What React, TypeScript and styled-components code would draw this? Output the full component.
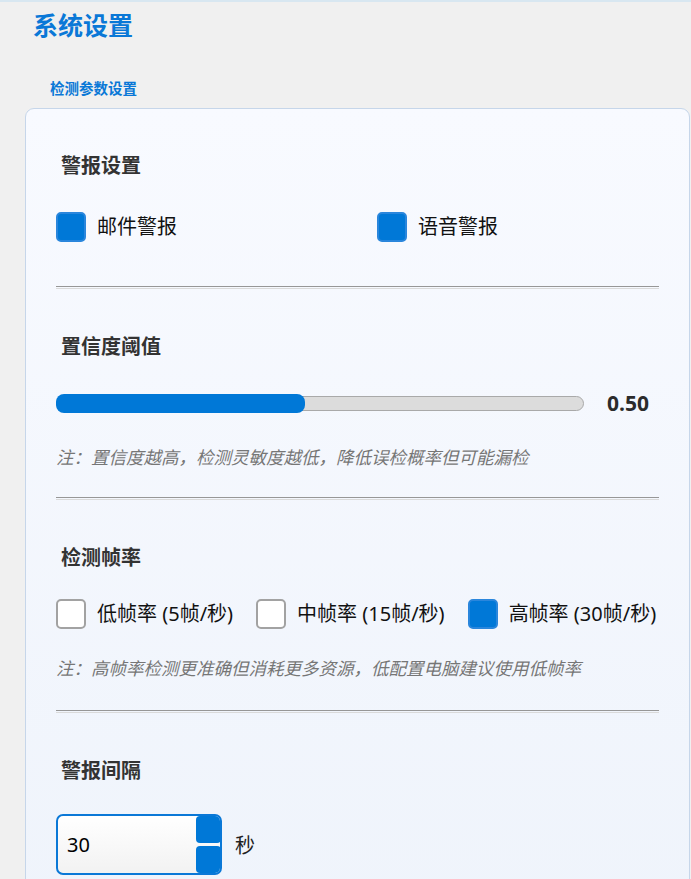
import React from "react";
import styled, { createGlobalStyle } from "styled-components";

const GlobalStyle = createGlobalStyle`
  html, body {
    margin: 0;
    padding: 0;
    overflow: hidden;
    background: #f0f0f0;
  }
  body {
    font-family: "Noto Sans", "Noto Sans CJK SC", sans-serif;
    color: #000;
  }
  * { box-sizing: border-box; }
`;

const Page = styled.div`
  border-top: 2px solid #d8e7f1;
  padding: 0 1px 0 25px;
  min-height: 879px;
`;

const PageTitle = styled.h1`
  margin: 0;
  padding: 6px 0 0 8px;
  font-size: 25px;
  line-height: 34px;
  font-weight: 700;
  color: #0a78d7;
`;

const TabLabel = styled.div`
  margin-top: 35px;
  padding-left: 25px;
  font-size: 14.5px;
  line-height: 22px;
  font-weight: 700;
  color: #0a78d7;
`;

const Card = styled.div`
  margin-top: 9px;
  border: 1px solid #c6d6ea;
  border-radius: 9px;
  background: linear-gradient(180deg, #f8faff 0%, #eef3fb 100%);
  padding: 0 30px 60px 30px;
  min-height: 900px;
`;

const Section = styled.section<{ $top: number; $bottom: number; $gap?: number }>`
  display: flex;
  flex-direction: column;
  padding-top: ${(p) => p.$top}px;
  padding-bottom: ${(p) => p.$bottom}px;
  gap: ${(p) => p.$gap ?? 28}px;
`;

const SectionTitle = styled.h2`
  margin: 0;
  padding-left: 5px;
  font-size: 20px;
  line-height: 28px;
  font-weight: 700;
  color: #333;
`;

const Divider = styled.hr`
  margin: 0;
  height: 3px;
  border: none;
  border-top: 1px solid #979797;
  border-bottom: 1px solid #dadada;
`;

const OptionGrid = styled.div`
  display: grid;
  grid-template-columns: 321px auto;
  align-items: center;
`;

const OptionRow = styled.div`
  display: flex;
  align-items: center;
  gap: 23px;
`;

const Option = styled.label`
  display: flex;
  align-items: center;
  gap: 11px;
  font-size: 20px;
  line-height: 30px;
  color: #111;
  white-space: nowrap;
`;

const Box = styled.span<{ $checked: boolean }>`
  display: inline-block;
  width: 30px;
  height: 30px;
  flex: none;
  border-radius: 5px;
  border: 2px solid ${(p) => (p.$checked ? "#2a86dc" : "#a2a2a2")};
  background: ${(p) => (p.$checked ? "#0078d7" : "#ffffff")};
`;

const SliderRow = styled.div`
  display: flex;
  align-items: center;
  gap: 23px;
  height: 28px;
`;

const Track = styled.div`
  position: relative;
  flex: 1;
  height: 15px;
  border: 1px solid #a9a9a9;
  border-radius: 8px;
  background: #dcdcdc;
`;

const Fill = styled.div`
  position: absolute;
  left: -1px;
  top: -3px;
  bottom: -3px;
  border-radius: 8px;
  background: #0078d7;
`;

const SliderValue = styled.span`
  width: 52px;
  font-size: 21px;
  font-weight: 700;
  color: #2b2b2b;
  font-family: "Open Sans", "Noto Sans", sans-serif;
`;

const Note = styled.p`
  margin: 0;
  font-size: 17.5px;
  line-height: 24px;
  font-style: italic;
  color: #767676;
`;

const SpinRow = styled.div`
  display: flex;
  align-items: center;
  gap: 13px;
`;

const SpinBox = styled.div`
  display: flex;
  width: 166px;
  height: 61px;
  border: 2px solid #0a78d7;
  border-radius: 7px;
  background: linear-gradient(180deg, #ffffff 0%, #f2f2f2 100%);
  overflow: hidden;
`;

const SpinValue = styled.span`
  flex: 1;
  align-self: center;
  padding-left: 9px;
  font-size: 20px;
  color: #000;
`;

const SpinButtons = styled.div`
  display: flex;
  flex-direction: column;
  gap: 3px;
  width: 25px;
  margin-right: -1px;
`;

const SpinButton = styled.span`
  flex: 1;
  border-radius: 4px;
  background: #0078d7;
`;

const Unit = styled.span`
  font-size: 20px;
  color: #222;
`;

export default function App() {
  const confidence = 0.5;
  const fillPct = confidence * 94.8;
  return (
    <>
      <GlobalStyle />
      <Page>
        <PageTitle>系统设置</PageTitle>
        <TabLabel>检测参数设置</TabLabel>
        <Card>
          <Section $top={43} $bottom={44} $gap={32}>
            <SectionTitle>警报设置</SectionTitle>
            <OptionGrid>
              <Option>
                <Box $checked />
                邮件警报
              </Option>
              <Option>
                <Box $checked />
                语音警报
              </Option>
            </OptionGrid>
          </Section>
          <Divider />
          <Section $top={44} $bottom={28}>
            <SectionTitle>置信度阈值</SectionTitle>
            <SliderRow>
              <Track>
                <Fill style={{ width: `${fillPct}%` }} />
              </Track>
              <SliderValue>{confidence.toFixed(2)}</SliderValue>
            </SliderRow>
            <Note>注：置信度越高，检测灵敏度越低，降低误检概率但可能漏检</Note>
          </Section>
          <Divider />
          <Section $top={44} $bottom={30} $gap={27}>
            <SectionTitle>检测帧率</SectionTitle>
            <OptionRow>
              <Option>
                <Box $checked={false} />
                低帧率 (5帧/秒)
              </Option>
              <Option>
                <Box $checked={false} />
                中帧率 (15帧/秒)
              </Option>
              <Option>
                <Box $checked />
                高帧率 (30帧/秒)
              </Option>
            </OptionRow>
            <Note>注：高帧率检测更准确但消耗更多资源，低配置电脑建议使用低帧率</Note>
          </Section>
          <Divider />
          <Section $top={44} $bottom={30} $gap={29}>
            <SectionTitle>警报间隔</SectionTitle>
            <SpinRow>
              <SpinBox>
                <SpinValue>30</SpinValue>
                <SpinButtons>
                  <SpinButton />
                  <SpinButton />
                </SpinButtons>
              </SpinBox>
              <Unit>秒</Unit>
            </SpinRow>
          </Section>
        </Card>
      </Page>
    </>
  );
}
